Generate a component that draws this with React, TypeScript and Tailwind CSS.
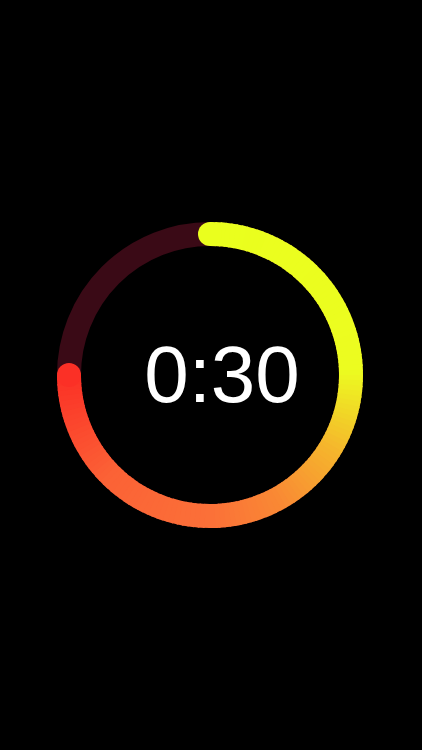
import React from 'react';

// ring geometry
const SIZE = 320;
const C = SIZE / 2;
const R = 141;
const STROKE = 24;
const SWEEP = 270; // degrees of progress, clockwise from 12 o'clock

const stops: [number, [number, number, number]][] = [
  [0, [234, 255, 30]],
  [88, [236, 252, 32]],
  [120, [245, 184, 44]],
  [150, [249, 138, 52]],
  [180, [251, 112, 56]],
  [225, [251, 98, 54]],
  [270, [251, 48, 38]],
];

function colorAt(deg: number) {
  for (let i = 0; i < stops.length - 1; i++) {
    const [a, ca] = stops[i];
    const [b, cb] = stops[i + 1];
    if (deg >= a && deg <= b) {
      const t = (deg - a) / (b - a);
      const c = ca.map((v, k) => Math.round(v + (cb[k] - v) * t));
      return `rgb(${c[0]},${c[1]},${c[2]})`;
    }
  }
  const last = stops[stops.length - 1][1];
  return `rgb(${last[0]},${last[1]},${last[2]})`;
}

function point(deg: number) {
  const rad = ((deg - 90) * Math.PI) / 180;
  return [C + R * Math.cos(rad), C + R * Math.sin(rad)];
}

function Ring() {
  const steps = 135;
  const segs = [];
  for (let i = 0; i < steps; i++) {
    const a0 = (SWEEP / steps) * i;
    const a1 = (SWEEP / steps) * (i + 1) + 0.6;
    const [x0, y0] = point(a0);
    const [x1, y1] = point(Math.min(a1, SWEEP));
    segs.push(
      <path
        key={i}
        d={`M ${x0} ${y0} A ${R} ${R} 0 0 1 ${x1} ${y1}`}
        stroke={colorAt(a0 + SWEEP / steps / 2)}
        strokeWidth={STROKE}
        fill="none"
      />
    );
  }
  const [sx, sy] = point(0);
  const [ex, ey] = point(SWEEP);
  return (
    <svg width={SIZE} height={SIZE} viewBox={`0 0 ${SIZE} ${SIZE}`}>
      <circle cx={C} cy={C} r={R} stroke="#3a0a16" strokeWidth={STROKE} fill="none" />
      {segs}
      <circle cx={sx} cy={sy} r={STROKE / 2} fill={colorAt(0)} />
      <circle cx={ex} cy={ey} r={STROKE / 2} fill={colorAt(SWEEP)} />
    </svg>
  );
}

export default function App() {
  return (
    <div className="w-[422px] h-[750px] bg-black flex items-center justify-center overflow-hidden">
      <div className="relative w-[320px] h-[320px] -ml-[2px]">
        <Ring />
        {/* time label sits over the ring */}
        <div className="absolute inset-0 flex items-center justify-center pl-[24px]">
          <span className="text-white text-[80px] leading-none font-['Liberation_Sans',Arial,sans-serif] tracking-[0px]">
            0:30
          </span>
        </div>
      </div>
    </div>
  );
}
